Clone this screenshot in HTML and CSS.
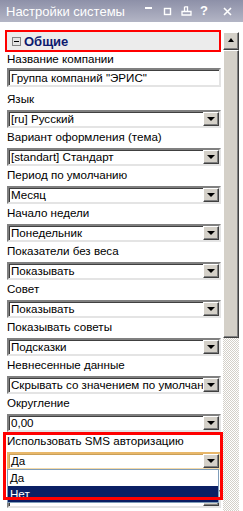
FILE: index.html
```html
<!DOCTYPE html>
<html lang="ru">
<head>
  <meta charset="UTF-8">
  <title>Настройки системы</title>
  <link rel="stylesheet" href="styles.css">
</head>
<body>
  <div class="window">
    <div class="titlebar">
      <span class="title">Настройки системы</span>
      <div class="tools">
        <svg width="10" height="10" viewBox="0 0 10 10"><rect x="1" y="1" width="7" height="2" fill="#fff"/></svg>
        <svg width="10" height="10" viewBox="0 0 10 10"><rect x="1.5" y="2.5" width="6" height="6" fill="none" stroke="#fff" stroke-width="1.4"/></svg>
        <svg width="11" height="10" viewBox="0 0 11 10"><path d="M3.5 0.8h3v4.5M3.5 0.8v4.5M1 5.5h9v3.5h-9z" fill="none" stroke="#fff" stroke-width="1.3"/></svg>
        <span class="help">?</span>
        <svg width="9" height="9" viewBox="0 0 9 9"><path d="M1 1l7 7M8 1l-7 7" stroke="#fff" stroke-width="1.6"/></svg>
      </div>
    </div>

    <div class="body">
      <div class="panel">
        <div class="group-head">
          <span class="toggle"></span>
          <span class="head-text">Общие</span>
        </div>

        <div class="field first">
          <label>Название компании</label>
          <div class="input">Группа компаний "ЭРИС"</div>
        </div>
        <div class="field">
          <label>Язык</label>
          <div class="select"><span class="val">[ru] Русский</span><span class="btn"></span></div>
        </div>
        <div class="field">
          <label>Вариант оформления (тема)</label>
          <div class="select"><span class="val">[standart] Стандарт</span><span class="btn"></span></div>
        </div>
        <div class="field">
          <label>Период по умолчанию</label>
          <div class="select"><span class="val">Месяц</span><span class="btn"></span></div>
        </div>
        <div class="field">
          <label>Начало недели</label>
          <div class="select"><span class="val">Понедельник</span><span class="btn"></span></div>
        </div>
        <div class="field">
          <label>Показатели без веса</label>
          <div class="select"><span class="val">Показывать</span><span class="btn"></span></div>
        </div>
        <div class="field">
          <label>Совет</label>
          <div class="select"><span class="val">Показывать</span><span class="btn"></span></div>
        </div>
        <div class="field">
          <label>Показывать советы</label>
          <div class="select"><span class="val">Подсказки</span><span class="btn"></span></div>
        </div>
        <div class="field">
          <label>Невнесенные данные</label>
          <div class="select"><span class="val">Скрывать со значением по умолчанию</span><span class="btn"></span></div>
        </div>
        <div class="field">
          <label>Округление</label>
          <div class="select"><span class="val">0,00</span><span class="btn"></span></div>
        </div>
        <div class="field sms">
          <label>Использовать SMS авторизацию</label>
          <div class="select focus"><span class="val">Да</span><span class="btn"></span></div>
          <ul class="list">
            <li>Да</li>
            <li class="sel">Нет</li>
          </ul>
          <div class="mark"></div>
        </div>
        <div class="field">
          <label></label>
          <div class="select"><span class="val"></span><span class="btn"></span></div>
        </div>
      </div>

      <div class="scrollbar">
        <div class="sb-btn"><span class="up"></span></div>
        <div class="thumb"></div>
        <div class="track"></div>
      </div>
    </div>
  </div>
</body>
</html>
```

FILE: styles.css
```css
body {
  margin: 0;
  font-family: "Liberation Sans", Arial, sans-serif;
  font-size: 11.6px;
  color: #000;
  background: #fff;
}
.window {
  width: 243px;
  height: 511px;
  overflow: hidden;
  display: flex;
  flex-direction: column;
}
.titlebar {
  height: 22px;
  flex: none;
  display: flex;
  align-items: center;
  justify-content: space-between;
  padding: 0 11px 0 6px;
  background: linear-gradient(#8d90a8, #b3b5c5);
  color: #fff;
}
.title {
  font-size: 13px;
}
.tools {
  display: flex;
  align-items: center;
  gap: 8px;
}
.tools svg:first-child {
  margin-right: 1px;
}
.help {
  font-weight: bold;
  font-size: 13px;
  width: 9px;
  margin-right: 6px;
  line-height: 10px;
}
.body {
  flex: 1;
  display: flex;
  min-height: 0;
}
.panel {
  flex: 1;
  min-width: 0;
  padding: 8px 2px 0 7px;
  position: relative;
}
.group-head {
  height: 18px;
  margin: 0 0 0 -2px;
  border: 2px solid #f00;
  background: #ececec;
  display: flex;
  align-items: center;
  padding-left: 5px;
  gap: 3px;
}
.toggle {
  width: 7px;
  height: 7px;
  border: 1px solid #848484;
  background: #e4e4e4;
  position: relative;
}
.toggle::after {
  content: "";
  position: absolute;
  left: 1px;
  top: 3px;
  width: 5px;
  height: 1px;
  background: #000;
}
.head-text {
  font-weight: bold;
  font-size: 13px;
  color: #0c1a6e;
}
.field {
  height: 38px;
  position: relative;
}
.field.first {
  height: 40px;
}
label {
  display: block;
  height: 14px;
  line-height: 14px;
  margin-bottom: 4px;
}
.first label {
  margin-bottom: 2px;
}
.input, .select {
  height: 14px;
  border: 2px solid;
  border-color: #808080 #e4e4e4 #e4e4e4 #808080;
  box-shadow: inset 1px 1px 0 #404040;
  background: #fff;
  display: flex;
  align-items: center;
  line-height: 14px;
}
.input {
  height: 15px;
  padding-left: 2px;
}
.select .val {
  flex: 1;
  width: 0;
  padding-left: 2px;
  white-space: nowrap;
  overflow: hidden;
}
.select .btn {
  width: 14px;
  height: 12px;
  background: #d4d0c8;
  border: 1px solid;
  border-color: #fff #404040 #404040 #fff;
  box-shadow: inset -1px -1px 0 #808080;
  position: relative;
}
.select .btn::after {
  content: "";
  position: absolute;
  left: 3px;
  top: 4px;
  border-left: 4px solid transparent;
  border-right: 4px solid transparent;
  border-top: 4px solid #000;
}
.select.focus {
  border-color: #e8b76a #f3d9a9 #f3d9a9 #e8b76a;
  box-shadow: inset 1px 1px 0 #c9a05a;
}
.list {
  position: absolute;
  left: 0;
  right: 2px;
  top: 35px;
  margin: 0;
  padding: 0;
  list-style: none;
  background: #fff;
  border: 1px solid #7f9db9;
  z-index: 2;
}
.list li {
  line-height: 16px;
  padding-left: 2px;
}
.list li.sel {
  background: #0a1f64;
  color: #fff;
}
.mark {
  position: absolute;
  left: -4px;
  right: -2px;
  top: -2px;
  height: 62px;
  border: 3px solid #f00;
  z-index: 3;
}
.scrollbar {
  width: 16px;
  flex: none;
  margin: 10px 4px 0 0;
  display: flex;
  flex-direction: column;
}
.sb-btn, .thumb {
  background: #d4d0c8;
  border: 1px solid;
  border-color: #fff #404040 #404040 #fff;
  box-shadow: inset -1px -1px 0 #808080;
}
.sb-btn {
  height: 16px;
  position: relative;
}
.up {
  position: absolute;
  left: 4px;
  top: 5px;
  border-left: 3px solid transparent;
  border-right: 3px solid transparent;
  border-bottom: 4px solid #000;
}
.thumb {
  height: 286px;
}
.track {
  flex: 1;
  background: repeating-conic-gradient(#d4d0c8 0 25%, #fff 0 50%) 0 0 / 2px 2px;
}
```
